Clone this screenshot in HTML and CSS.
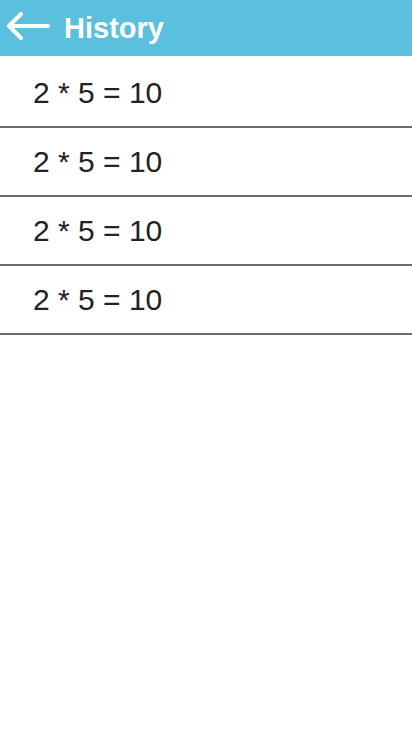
FILE: index.html
```html
<!DOCTYPE html>
<html lang="en">
<head>
    <meta charset="UTF-8">
    <meta name="viewport" content="width=device-width, initial-scale=1.0">
    <title>History</title>
    <link rel="stylesheet" href="styles.css">
</head>
<body>
    <div class="header">
        <button class="back-btn" aria-label="Back">
            <svg width="44" height="30" viewBox="0 0 44 30">
                <path d="M3 14 H42 M15 2 L3 14 L15 26" fill="none" stroke="#fff" stroke-width="4" stroke-linecap="round" stroke-linejoin="round"/>
            </svg>
        </button>
        <span class="title">History</span>
    </div>
    <ul class="history-list">
        <li class="history-item">2 * 5 = 10</li>
        <li class="history-item">2 * 5 = 10</li>
        <li class="history-item">2 * 5 = 10</li>
        <li class="history-item">2 * 5 = 10</li>
    </ul>
</body>
</html>
```

FILE: styles.css
```css
body {
    font-family: "Liberation Sans", Arial, sans-serif;
    margin: 0;
    padding: 0;
    background-color: #fff;
}
.header {
    display: flex;
    align-items: center;
    height: 56px;
    padding: 0 0 0 6px;
    gap: 14px;
    background: #5bbfde;
    box-sizing: border-box;
}
.back-btn {
    display: flex;
    align-items: center;
    padding: 0;
    margin-top: -2px;
    background: none;
    border: none;
    cursor: pointer;
}
.title {
    color: #fff;
    font-weight: bold;
    font-size: 29px;
}
.history-list {
    list-style: none;
    margin: 0;
    padding: 3px 0 0 0;
}
.history-item {
    display: flex;
    align-items: center;
    height: 67px;
    padding-left: 33px;
    font-size: 30px;
    color: #222;
    border-bottom: 2px solid #6b6b6b;
}
```
